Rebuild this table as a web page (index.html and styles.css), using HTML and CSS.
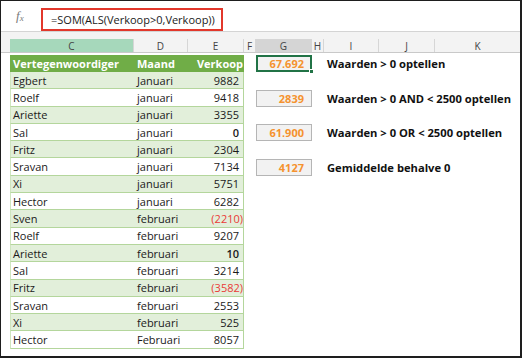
FILE: index.html
```html
<!DOCTYPE html>
<html lang="nl">
<head>
<meta charset="utf-8">
<title>SOM ALS</title>
<link rel="stylesheet" href="styles.css">
</head>
<body>
<div class="frame">
  <div class="fbar">
    <span class="fx">f<span class="fx-x">x</span></span>
    <div class="formula">=SOM(ALS(Verkoop&gt;0,Verkoop))</div>
  </div>
  <div class="band"></div>
  <div class="colhead">
    <div class="ch ch-pad"></div>
    <div class="ch ch-c sel-table">C</div>
    <div class="ch ch-d">D</div>
    <div class="ch ch-e">E</div>
    <div class="ch ch-f">F</div>
    <div class="ch ch-g sel-cell">G</div>
    <div class="ch ch-h">H</div>
    <div class="ch ch-i">I</div>
    <div class="ch ch-j">J</div>
    <div class="ch ch-k">K</div>
  </div>
  <div class="sheet">
    <div class="pad"></div>
    <div class="table">
      <div class="trow thead"><span>Vertegenwoordiger</span><span>Maand</span><span class="num">Verkoop</span></div>
      <div class="trow alt"><span>Egbert</span><span>Januari</span><span class="num">9882</span></div>
      <div class="trow"><span>Roelf</span><span>januari</span><span class="num">9418</span></div>
      <div class="trow alt"><span>Ariette</span><span>januari</span><span class="num">3355</span></div>
      <div class="trow"><span>Sal</span><span>januari</span><span class="num strong">0</span></div>
      <div class="trow alt"><span>Fritz</span><span>januari</span><span class="num">2304</span></div>
      <div class="trow"><span>Sravan</span><span>januari</span><span class="num">7134</span></div>
      <div class="trow alt"><span>Xi</span><span>januari</span><span class="num">5751</span></div>
      <div class="trow"><span>Hector</span><span>januari</span><span class="num">6282</span></div>
      <div class="trow alt"><span>Sven</span><span>februari</span><span class="num neg">(2210)</span></div>
      <div class="trow"><span>Roelf</span><span>februari</span><span class="num">9207</span></div>
      <div class="trow alt"><span>Ariette</span><span>februari</span><span class="num strong">10</span></div>
      <div class="trow"><span>Sal</span><span>februari</span><span class="num">3214</span></div>
      <div class="trow alt"><span>Fritz</span><span>februari</span><span class="num neg">(3582)</span></div>
      <div class="trow"><span>Sravan</span><span>februari</span><span class="num">2553</span></div>
      <div class="trow alt"><span>Xi</span><span>februari</span><span class="num">525</span></div>
      <div class="trow"><span>Hector</span><span>Februari</span><span class="num">8057</span></div>
    </div>
    <div class="results">
      <div class="item">
        <div class="box selected">67.692<span class="handle"></span></div>
        <div class="label">Waarden &gt; 0 optellen</div>
      </div>
      <div class="item">
        <div class="box">2839</div>
        <div class="label">Waarden &gt; 0 AND &lt; 2500 optellen</div>
      </div>
      <div class="item">
        <div class="box">61.900</div>
        <div class="label">Waarden &gt; 0 OR &lt; 2500 optellen</div>
      </div>
      <div class="item">
        <div class="box">4127</div>
        <div class="label">Gemiddelde behalve 0</div>
      </div>
    </div>
  </div>
</div>
</body>
</html>
```

FILE: styles.css
```css
* { box-sizing: border-box; }

body {
  margin: 0;
  background: #ffffff;
  font-family: "Open Sans", "Noto Sans", sans-serif;
}

.frame {
  width: 522px;
  height: 358px;
  border: 1px solid #1e1e1e;
  border-right-width: 2px;
  border-bottom-width: 2px;
  background: #ffffff;
  overflow: hidden;
}

.fbar {
  height: 30px;
  display: flex;
  align-items: flex-end;
  background: #ffffff;
}

.fx {
  width: 40px;
  height: 30px;
  padding-left: 15px;
  display: flex;
  align-items: center;
  font-family: "Liberation Serif", serif;
  font-style: italic;
  font-size: 13px;
  color: #7a7a7a;
}

.fx-x {
  font-size: 9px;
  margin-top: 3px;
}

.formula {
  width: 182px;
  height: 23px;
  border: 2px solid #e2372b;
  padding-left: 8px;
  display: flex;
  align-items: center;
  font-size: 11px;
  color: #1a1a1a;
  white-space: nowrap;
}

.band {
  height: 8px;
  background: #f3f3f3;
  border-top: 1px solid #d4d4d4;
}

.colhead {
  height: 14px;
  display: flex;
  background: #f3f3f3;
  border-bottom: 1px solid #c9c9c9;
}

.ch {
  border-right: 1px solid #d6d6d6;
  display: flex;
  align-items: center;
  justify-content: center;
  font-size: 10px;
  color: #444444;
}

.ch-pad { width: 9px; border-right: none; }
.ch-c { width: 124px; }
.ch-d { width: 54px; }
.ch-e { width: 56px; }
.ch-f { width: 12px; }
.ch-g { width: 56px; }
.ch-h { width: 12px; }
.ch-i { width: 55px; }
.ch-j { width: 56px; }
.ch-k { flex: 1; border-right: none; }

.sel-table { background: #a6d8bb; }
.sel-cell { background: #d5d5d5; }

.sheet {
  display: flex;
  padding-top: 2px;
}

.pad { width: 9px; }

.table {
  width: 234px;
  display: flex;
  flex-direction: column;
}

.trow {
  display: grid;
  grid-template-columns: 124px 54px 56px;
  height: 17.3px;
  align-items: center;
  font-size: 11px;
  color: #1a1a1a;
  border-bottom: 1px solid #b4d69c;
  border-left: 1px solid #cfe5bf;
  border-right: 1px solid #b4d69c;
}

.trow span {
  padding-left: 2px;
  white-space: nowrap;
}

.trow .num {
  text-align: right;
  padding-right: 6px;
}

.trow .neg {
  color: #ea3a36;
  padding-right: 2px;
}

.trow .strong { font-weight: 600; }

.thead {
  height: 17px;
  background: #70ad47;
  color: #ffffff;
  font-weight: 700;
  font-size: 11px;
  border-color: #70ad47;
}

.thead .num { padding-right: 2px; }

.alt { background: #e2efda; }

.results {
  margin-left: 12px;
  display: flex;
  flex-direction: column;
  gap: 17.3px;
}

.item {
  height: 17.3px;
  display: flex;
  align-items: center;
}

.box {
  position: relative;
  width: 56px;
  height: 17.3px;
  background: #f2f2f2;
  border: 1px solid #b5b5b5;
  display: flex;
  align-items: center;
  justify-content: flex-end;
  padding-right: 7px;
  font-size: 11px;
  font-weight: 700;
  color: #f5922f;
}

.box.selected {
  border: 2px solid #217346;
  padding-right: 6px;
}

.handle {
  position: absolute;
  right: -4px;
  bottom: -4px;
  width: 5px;
  height: 5px;
  background: #217346;
  border: 1px solid #ffffff;
}

.label {
  margin-left: 15px;
  font-size: 11.2px;
  font-weight: 700;
  color: #111111;
  white-space: nowrap;
}
```
